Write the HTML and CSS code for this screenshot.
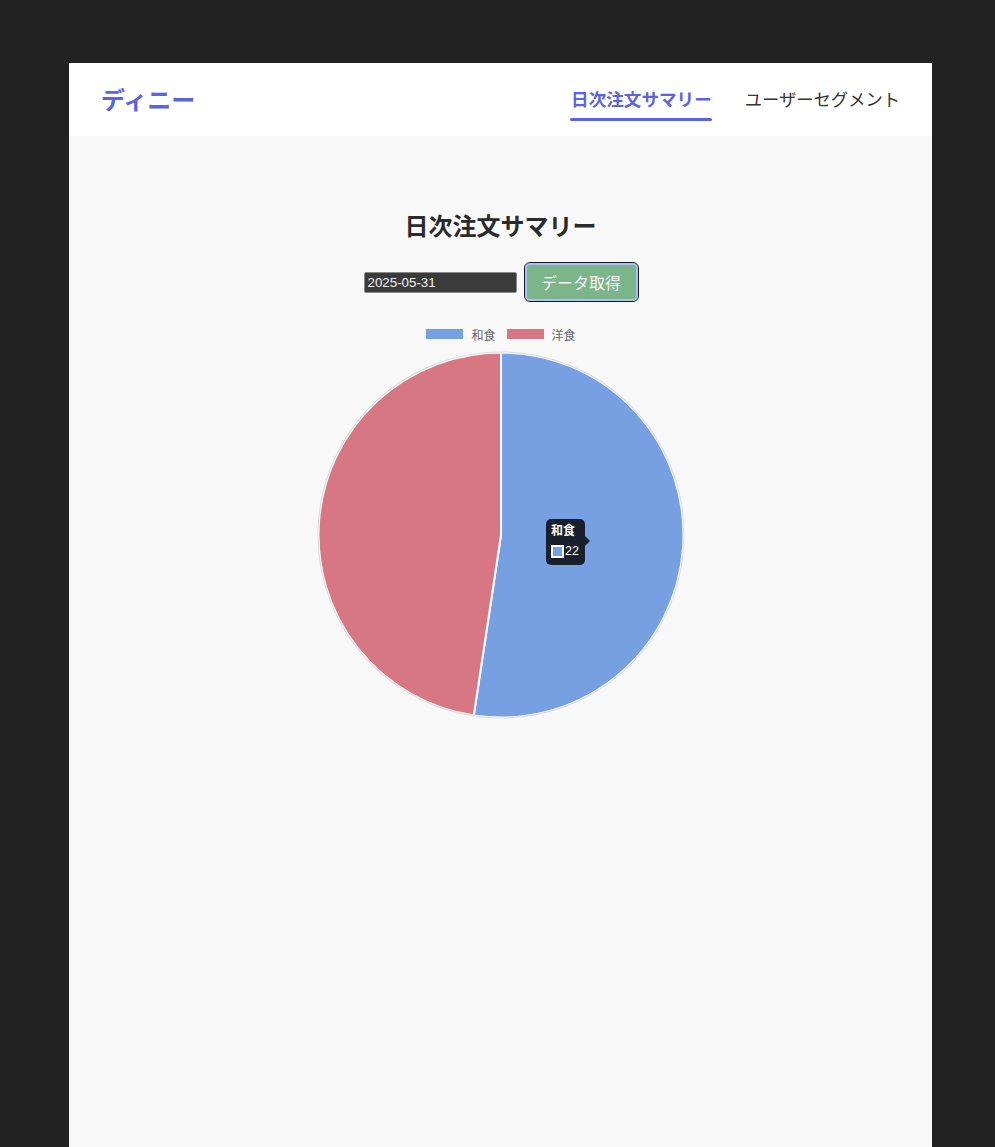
FILE: index.html
```html
<!DOCTYPE html>
<html lang="ja">
<head>
<meta charset="utf-8">
<title>ディニー</title>
<link rel="stylesheet" href="styles.css">
</head>
<body>
<div class="app">
  <header class="header">
    <div class="logo">ディニー</div>
    <nav class="nav">
      <a class="nav-item active">日次注文サマリー</a>
      <a class="nav-item">ユーザーセグメント</a>
    </nav>
  </header>
  <main class="main">
    <h2 class="title">日次注文サマリー</h2>
    <div class="controls">
      <input class="date-input" type="text" value="2025-05-31">
      <button class="fetch-btn">データ取得</button>
    </div>
    <div class="chart">
      <div class="legend">
        <span class="legend-item"><span class="swatch swatch-blue"></span>和食</span>
        <span class="legend-item"><span class="swatch swatch-red"></span>洋食</span>
      </div>
      <div class="pie-wrap">
        <svg class="pie" width="370" height="370" viewBox="0 0 370 370">
          <path d="M185,185 L185,2.5 A182.5,182.5 0 1 1 157.8,365.46 Z" fill="#77a0e3" stroke="#ffffff" stroke-width="2" stroke-linejoin="round"/>
          <path d="M185,185 L157.8,365.46 A182.5,182.5 0 0 1 185,2.5 Z" fill="#d87784" stroke="#ffffff" stroke-width="2" stroke-linejoin="round"/>
          <circle cx="185" cy="185" r="183" fill="none" stroke="#dcdcdc" stroke-width="1.2"/>
        </svg>
        <div class="tooltip">
          <div class="tooltip-title">和食</div>
          <div class="tooltip-body"><span class="tooltip-box"></span>22</div>
        </div>
      </div>
    </div>
  </main>
</div>
</body>
</html>
```
FILE: styles.css
```css
html, body {
  margin: 0;
  padding: 0;
}
body {
  background: #222222;
  font-family: "Noto Sans CJK JP", "Noto Sans", sans-serif;
  padding-top: 63px;
  min-height: 1147px;
  box-sizing: border-box;
}
.app {
  margin-left: 69px;
  width: 863px;
  min-height: 1084px;
  background: #f8f8f8;
  display: flex;
  flex-direction: column;
}
.header {
  height: 73px;
  background: #ffffff;
  display: flex;
  align-items: center;
  justify-content: space-between;
  padding: 0 32px;
}
.logo {
  color: #5a62e6;
  font-size: 24px;
  font-weight: 700;
  line-height: 1;
  margin-top: -2px;
}
.nav {
  display: flex;
  gap: 33px;
  align-self: stretch;
}
.nav-item {
  position: relative;
  display: flex;
  align-items: center;
  font-size: 17.3px;
  color: #333333;
  margin-top: -2px;
}
.nav-item.active {
  color: #5a62e6;
  font-weight: 700;
  font-size: 17.6px;
}
.nav-item.active::after {
  content: "";
  position: absolute;
  left: -1px;
  right: 0;
  top: 57px;
  height: 3px;
  border-radius: 2px;
  background: #5a62e6;
}
.main {
  display: flex;
  flex-direction: column;
  align-items: center;
  padding-top: 73px;
}
.title {
  margin: 0;
  font-size: 24px;
  line-height: 32px;
  font-weight: 700;
  color: #2b2b2b;
}
.controls {
  display: flex;
  align-items: center;
  gap: 8px;
  margin-top: 22px;
}
.date-input {
  width: 153px;
  height: 21px;
  box-sizing: border-box;
  background: #3b3b3b;
  color: #f2f2f2;
  border: 1px solid #8a8a8a;
  border-radius: 2px;
  padding: 1px 3px;
  font-family: "Liberation Sans", Arial, sans-serif;
  font-size: 13.33px;
}
.fetch-btn {
  width: 113px;
  height: 38px;
  box-sizing: border-box;
  background: #7cb58a;
  color: #f4f4f4;
  font-family: "Noto Sans CJK JP", sans-serif;
  font-size: 16px;
  border: 2px solid #a9c1f2;
  outline: 1px solid #151a2a;
  outline-offset: 0;
  border-radius: 5px;
  padding: 0;
}
.chart {
  display: flex;
  flex-direction: column;
  align-items: center;
  margin-top: 26px;
}
.legend {
  display: flex;
  gap: 11px;
  height: 14px;
  align-items: center;
  font-size: 12px;
  color: #666666;
  margin-left: 1px;
}
.legend-item {
  display: flex;
  align-items: center;
  gap: 8px;
}
.swatch {
  width: 37px;
  height: 10px;
  display: inline-block;
}
.swatch-blue { background: #77a0e3; }
.swatch-red { background: #d87784; }
.pie-wrap {
  position: relative;
  width: 370px;
  height: 370px;
  margin-top: 8.5px;
}
.pie {
  display: block;
}
.tooltip {
  position: absolute;
  left: 230.5px;
  top: 169.5px;
  width: 39px;
  height: 46px;
  box-sizing: border-box;
  background: #18202d;
  border-radius: 5px;
  padding: 3px 5px;
  color: #ffffff;
  font-size: 12px;
}
.tooltip::after {
  content: "";
  position: absolute;
  right: -5px;
  top: 17px;
  border-top: 5px solid transparent;
  border-bottom: 5px solid transparent;
  border-left: 5px solid #18202d;
}
.tooltip-title {
  font-weight: 700;
  line-height: 16px;
}
.tooltip-body {
  display: flex;
  align-items: center;
  margin-top: 6px;
  font-family: "Liberation Sans", Arial, sans-serif;
  font-size: 12.5px;
  line-height: 15px;
}
.tooltip-box {
  width: 13px;
  height: 13px;
  box-sizing: border-box;
  border: 2px solid #ffffff;
  background: #77a0e3;
  margin-right: 1px;
}
```
